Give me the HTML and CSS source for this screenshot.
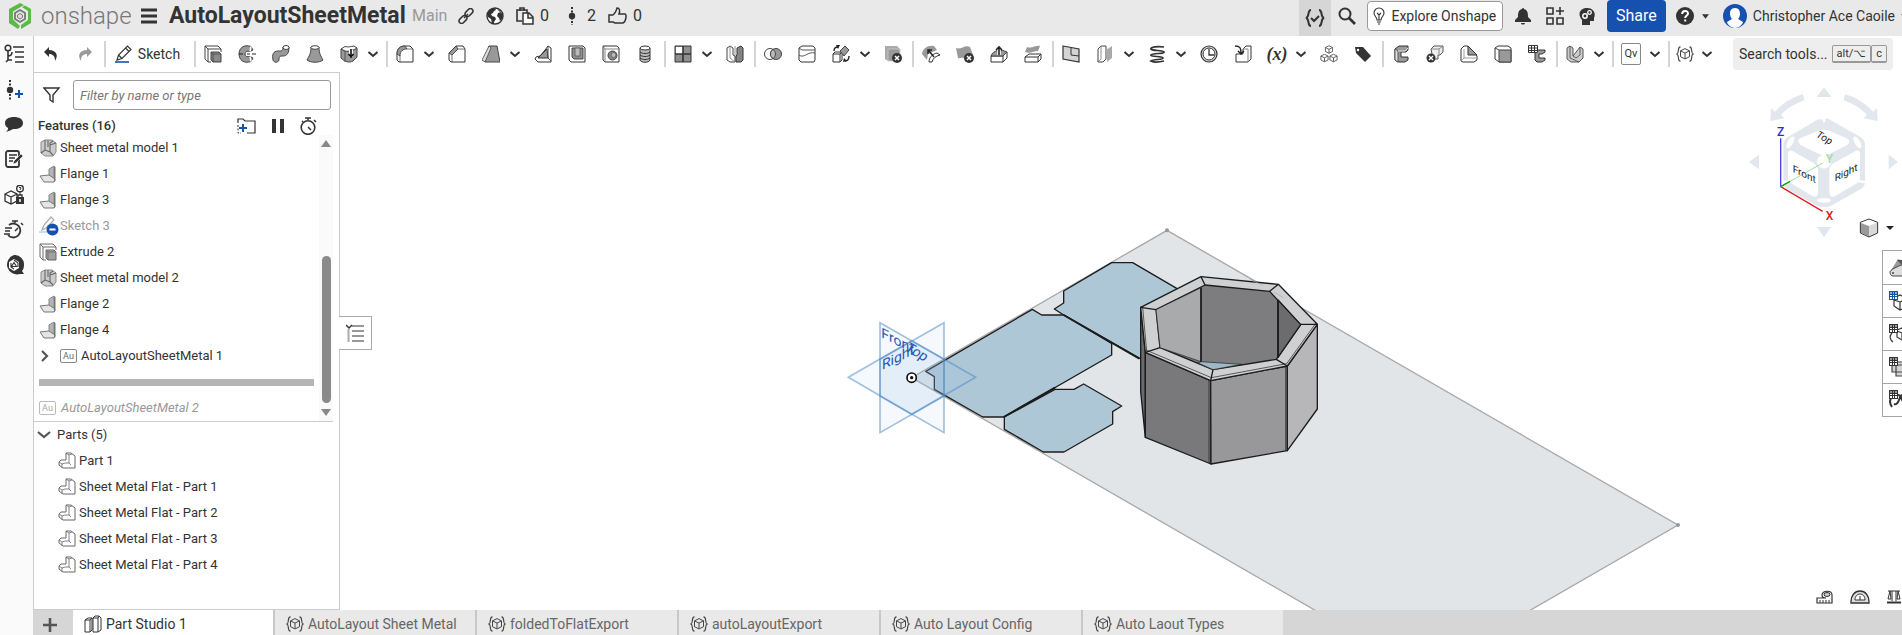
FILE: index.html
```html
<!DOCTYPE html>
<html lang="en">
<head>
<meta charset="utf-8">
<title>AutoLayoutSheetMetal | Part Studio 1</title>
<link rel="stylesheet" href="styles.css">
</head>
<body>
<svg class="sprite" aria-hidden="true">
  <defs>
    <symbol id="chev" viewBox="0 0 12 12"><path d="M1.500 4L6 8l4.500-4" fill="none" stroke="#333" stroke-width="2"/></symbol>
    <symbol id="caret" viewBox="0 0 8 5"><path d="M0 0h8L4 5z" fill="#333"/></symbol>
    <symbol id="undo" viewBox="0 0 18 18"><path d="M7 2L2 7l5 5V9c4 0 6 2 6 7 4-6 1-11-6-11z" fill="#333"/></symbol>
    <symbol id="redo" viewBox="0 0 18 18"><path d="M11 2l5 5-5 5V9c-4 0-6 2-6 7-4-6-1-11 6-11z" fill="#999"/></symbol>
    <symbol id="pencil" viewBox="0 0 18 18"><path d="M2 15l1.500-5 9-9 3.500 3.500-9 9z M3.500 10l3.500 3.500M10.500 3l3.500 3.500" fill="#fff" stroke="#333" stroke-width="1.200"/><path d="M0 17h14" stroke="#1651b0" stroke-width="1.600"/></symbol>
    <symbol id="extrude" viewBox="0 0 18 18"><path d="M1 1h13l3 3M1 1v13l3 3V4L1 1M4 4h13v3M4 17h3" fill="none" stroke="#444"/><path d="M7 7h8l2 2v8H9l-2-2z" fill="#8a8a8a" stroke="#444"/><path d="M7 7l2 2h8M9 9v8" fill="none" stroke="#444" stroke-width=".8"/></symbol>
    <symbol id="revolve" viewBox="0 0 18 18"><path d="M13 1.500C6-1 1 3 1 9s5 10 12 7.500l2-3.500-3-1.500c-3 1-5-.5-5-2.500s2-3.500 5-2.500L15 5z" fill="#999" stroke="#444"/><path d="M1 9h4M9 9h3M14 9h4" stroke="#222" stroke-width="1.200"/><path d="M13 1.500l-1 5M13 16.500l-1-5" stroke="#fff" stroke-width="1.500"/></symbol>
    <symbol id="sweep" viewBox="0 0 18 18"><path d="M1 15c-1-5 0-9 5-9 4 0 5 0 5-4h6c0 6-2 9-6 9-4 0-4 1-4 4-1 3-5 3-6 0z" fill="#999" stroke="#444"/><ellipse cx="14" cy="2.500" rx="3" ry="2" fill="#fff" stroke="#444"/></symbol>
    <symbol id="loft" viewBox="0 0 18 18"><path d="M5 2c0 7-2 9-4 13 4 3 12 3 16 0-2-4-4-6-4-13z" fill="#999" stroke="#444"/><ellipse cx="9" cy="2.500" rx="4" ry="1.800" fill="#fff" stroke="#444"/></symbol>
    <symbol id="thicken" viewBox="0 0 18 18"><path d="M1 4l4 2c4 0 8 0 12-3v9l-4 4c-4 2-8 1-12-3z" fill="#999" stroke="#444"/><path d="M1 4l4-2.500c3 1 6 0 9-.5l3 2c-3 2-8 4-12 3z" fill="#fff" stroke="#444"/><path d="M5 6v11" stroke="#555"/><path d="M11 5v7" stroke="#fff" stroke-width="4"/><path d="M11 4v7M8.500 9l2.500 3 2.500-3" stroke="#111" stroke-width="1.600" fill="none"/></symbol>
    <symbol id="fillet" viewBox="0 0 18 18"><path d="M1 9c0-5 3-8 8-8h5l3 3v13H3l-2-2z" fill="#fff" stroke="#333"/><path d="M1 9c0-5 3-8 8-8l2 3c-4 0-7 2-7 7z" fill="#999" stroke="#333" stroke-width=".8"/><path d="M4 10v7M11 4h6" stroke="#555" stroke-width=".8"/></symbol>
    <symbol id="chamfer" viewBox="0 0 18 18"><path d="M1 8l7-7h7l2 3v13H3l-2-2z" fill="#fff" stroke="#333"/><path d="M1 8l7-7 2 3-6 6z" fill="#999" stroke="#333" stroke-width=".8"/><path d="M4 10v7M10 4h7" stroke="#555" stroke-width=".8"/></symbol>
    <symbol id="draft" viewBox="0 0 18 18"><path d="M7 1h8l3 16H3z" fill="#999" stroke="#444"/><path d="M7 1L0 15l3 2L9 3z" fill="#ddd" stroke="#444" stroke-width=".8"/></symbol>
    <symbol id="rib" viewBox="0 0 18 18"><path d="M14 1l3 2v14H4l-3-3 1-2 4-1 5-6z" fill="#fff" stroke="#333"/><path d="M13 4L4 13h10z" fill="#999" stroke="#333"/><path d="M14 1v12l3 3" fill="none" stroke="#555"/></symbol>
    <symbol id="shell" viewBox="0 0 18 18"><path d="M1 1h14l2 2v14H3l-2-2z" fill="#fff" stroke="#333"/><path d="M4 3h11v11H6l-2-2z" fill="#8f8f8f" stroke="#444"/><path d="M7 3h5v8H7z" fill="#bbb" stroke="#555" stroke-width=".8"/></symbol>
    <symbol id="hole" viewBox="0 0 18 18"><path d="M1 1h14l2 2v14H3l-2-2z" fill="#fff" stroke="#333"/><path d="M1 1l2 3v13M3 4h14" fill="none" stroke="#666" stroke-width=".8"/><circle cx="10.500" cy="10.500" r="4.500" fill="#888" stroke="#444"/><circle cx="11.500" cy="10" r="2.500" fill="#bbb" stroke="#555" stroke-width=".8"/></symbol>
    <symbol id="thread" viewBox="0 0 18 18"><path d="M4 3v12c1 3 9 3 10 0V3z" fill="#bbb" stroke="#333"/><path d="M4 7c2 2 8 2 10 0M4 10c2 2 8 2 10 0M4 13c2 2 8 2 10 0" fill="none" stroke="#333"/><ellipse cx="9" cy="3" rx="5" ry="2" fill="#fff" stroke="#333"/></symbol>
    <symbol id="pattern" viewBox="0 0 18 18"><path d="M1 1h16v16H1z" fill="#8f8f8f" stroke="#333"/><path d="M2 2h7v7H2z" fill="#fff"/><path d="M9 1v16M1 9h16" stroke="#333" stroke-width="1.600"/></symbol>
    <symbol id="mirror" viewBox="0 0 18 18"><path d="M1 3l3-2 3 2v7l2 1v6H4l-3-2z" fill="#fff" stroke="#444"/><path d="M17 3l-2-2-4 2v7l-1 1v6h5l2-2z" fill="#888" stroke="#333"/><path d="M4 1v12l5 4M9 1v10M14 3v12" stroke="#777" stroke-width=".8" fill="none"/></symbol>
    <symbol id="boolean" viewBox="0 0 18 18"><circle cx="6" cy="9" r="5.500" fill="#fff" stroke="#444"/><circle cx="12" cy="9" r="5.500" fill="#999" stroke="#444"/><path d="M9 4.400a5.500 5.500 0 010 9.200 5.500 5.500 0 010-9.200z" fill="#bbb" stroke="#444"/></symbol>
    <symbol id="split" viewBox="0 0 18 18"><path d="M1 3l3-2h11l2 2v12l-1 2H3l-2-2z" fill="#fff" stroke="#333"/><path d="M1 3l3 2h13M1 10c5 4 9-4 16-2" stroke="#555" fill="none"/></symbol>
    <symbol id="transform" viewBox="0 0 18 18"><path d="M1 9l2-2h7v8l-2 2H1zM1 9h7v8M8 9l2-2" fill="#fff" stroke="#333"/><path d="M13 1l4 4-5 6-4-5z" fill="#999" stroke="#444"/><path d="M2 6c0-3 2-4 4-4M17 11c0 3-1 5-4 5" fill="none" stroke="#222" stroke-width="1.400"/><path d="M4 0h4L6 4zM11 17l1-4 3 3z" fill="#222"/></symbol>
    <symbol id="delpart" viewBox="0 0 18 18"><path d="M1 1h12l3 3H4v12l-3-2z" fill="#aaa"/><path d="M4 4h12v12H4z" fill="#999" stroke="#ccc" stroke-width=".8"/><circle cx="13" cy="13" r="5" fill="#333"/><path d="M11 11l4 4M15 11l-4 4" stroke="#fff" stroke-width="1.500"/></symbol>
    <symbol id="movef" viewBox="0 0 18 18"><path d="M0 9C1 3 6 0 12 1l3 4-9 4-1 6z" fill="#999"/><path d="M7 17c0-4 3-8 8-9l3 2c-4 1-7 3-8 7z" fill="#fff" stroke="#333"/><path d="M12 12L7 6M6 9V5h4" fill="none" stroke="#222" stroke-width="1.500"/></symbol>
    <symbol id="delface" viewBox="0 0 18 18"><path d="M0 3c5 2 9-4 14-1l3 8-7 5c-3-4-6-1-8-2z" fill="#999"/><circle cx="13" cy="13" r="5" fill="#333"/><path d="M11 11l4 4M15 11l-4 4" stroke="#fff" stroke-width="1.500"/></symbol>
    <symbol id="moveup" viewBox="0 0 18 18"><path d="M1 11h12v6H1zM13 11l4-4v6l-4 4" fill="#fff" stroke="#333"/><path d="M1 11c2-6 10-7 16-4l-4 4z" fill="#999" stroke="#444"/><path d="M9 10V2" stroke="#fff" stroke-width="3.500"/><path d="M9 10V2M6 5l3-3 3 3" fill="none" stroke="#222" stroke-width="1.600"/></symbol>
    <symbol id="replace" viewBox="0 0 18 18"><path d="M1 12l4-3h12v5l-3 3H1zM1 12h13v5M14 12l3-3" fill="#fff" stroke="#333"/><path d="M3 2c5 2 9-2 13-1l-2 5c-4 0-8 3-13 1z" fill="#999"/></symbol>
    <symbol id="plane" viewBox="0 0 18 18"><path d="M1 1l16 3v13L1 14z" fill="#d4d4d4" stroke="#333" stroke-width="1.200"/><path d="M9 3v7l8 1" fill="none" stroke="#333"/></symbol>
    <symbol id="offset" viewBox="0 0 18 18"><path d="M2 4l3-3h5v13l-3 3H2z" fill="#fff" stroke="#444"/><path d="M5 1v13M2 17l3-3" stroke="#777" stroke-width=".8"/><path d="M10 5l6-4v12l-5 4z" fill="#aaa"/></symbol>
    <symbol id="helix" viewBox="0 0 18 18"><path d="M16 2C10 1 2 2 3 4s12 1 13 3-12 1-13 3 12 1 12 3-9 1-12 3c4 2 9 1 13 0" fill="none" stroke="#333" stroke-width="1.700"/></symbol>
    <symbol id="clock" viewBox="0 0 18 18"><circle cx="9" cy="9" r="8" fill="#ddd" stroke="#333" stroke-width="1.200"/><circle cx="9" cy="9" r="6" fill="#fff" stroke="#333"/><path d="M9 4v6h5" fill="none" stroke="#333" stroke-width="1.300"/></symbol>
    <symbol id="import" viewBox="0 0 18 18"><path d="M2 9h7V4l3-3h5v13l-3 3H2z" fill="#fff" stroke="#333"/><path d="M9 4h5v13" fill="none" stroke="#888"/><path d="M1 1c5 0 6 2 6 7M4 6l3 3 3-3" fill="none" stroke="#222" stroke-width="1.400"/></symbol>
    <symbol id="cube" viewBox="0 0 10 10"><path d="M5 .8l4 2v4.400l-4 2-4-2V2.800z M1 2.800l4 2 4-2M5 4.800v4.400" fill="#fff" stroke="#444" stroke-width=".9"/></symbol>
    <symbol id="cubes" viewBox="0 0 18 18"><use href="#cube" x="4.500" y="0" width="9" height="9"/><use href="#cube" x="0" y="8.500" width="9" height="9"/><use href="#cube" x="9" y="8.500" width="9" height="9"/></symbol>
    <symbol id="tag" viewBox="0 0 18 18"><path d="M1 2l8 0 8 9-6 6-9-9z" fill="#333"/><circle cx="4" cy="5" r="1.200" fill="#fff"/></symbol>
    <symbol id="cshape" viewBox="0 0 18 18"><path d="M3 4l4-3h9v4l-2 2H9v5h7v3l-3 2H6l-3-2z" fill="#999" stroke="#333"/><path d="M3 4l3 2v11L3 15z" fill="#ddd" stroke="#444" stroke-width=".8"/><path d="M6 6h7l3-3" stroke="#ddd" fill="none"/></symbol>
    <symbol id="unfoldx" viewBox="0 0 18 18"><path d="M5 4l3-3h9v6l-3 3h-2v4H7z" fill="#eee" stroke="#555"/><path d="M5 4h8v5M13 4l4-3" fill="none" stroke="#888"/><circle cx="5" cy="13" r="4.500" fill="#333"/><path d="M3 11l4 4M7 11l-4 4" stroke="#fff" stroke-width="1.400"/></symbol>
    <symbol id="corner" viewBox="0 0 18 18"><path d="M1 4l3-3h4l9 10v4l-3 2H3l-2-1z" fill="#fff" stroke="#333"/><path d="M8 1v9h9z" fill="#999" stroke="#333"/><path d="M4 4v9l-3 3M4 13h12" fill="none" stroke="#888" stroke-width=".8"/></symbol>
    <symbol id="tab" viewBox="0 0 18 18"><path d="M1 3l3-2h10l3 2v14H5l-4-3z" fill="#fff" stroke="#333"/><path d="M5 5h12v12H5z" fill="#999" stroke="#444"/><path d="M1 3l4 2" stroke="#444"/></symbol>
    <symbol id="tablec" viewBox="0 0 18 18"><path d="M7 5h10v2l-3 2h-3v4h6v2l-3 2H9l-2-2z" fill="#999" stroke="#333"/><path d="M0 0h10v8H0z" fill="#fff"/><path d="M.5.500h9v7h-9zM0 3h10M0 5.500h10M3.500 0v8M6.500 0v8" fill="none" stroke="#333"/></symbol>
    <symbol id="smodel" viewBox="0 0 18 18"><path d="M1 3l3-2 3 2v8l7-9 3 2v9l-4 4H5l-4-3z" fill="#ccc" stroke="#555"/><path d="M4 1v12l9 4M7 11l3 2 4-3V2" fill="none" stroke="#555" stroke-width=".9"/></symbol>
    <symbol id="sheetm" viewBox="0 0 18 18"><path d="M2 3l4-2h7l4 3v9l-3 4H6l-4-3z" fill="#ccc" stroke="#888"/><path d="M6 1v10l5 2V4l3-2M9 1v7M11 13l3 3M2 14l4-3M11 6l6-2" fill="none" stroke="#666" stroke-width="1.100"/></symbol>
    <symbol id="flange" viewBox="0 0 18 18"><path d="M10 4l5-3v12l-5-2z" fill="#b4b4b4" stroke="#888"/><path d="M1 11l9-1 6 4-1 3H5z" fill="#e4e4e4" stroke="#777"/><path d="M15 1l1.500 1v14L15 17z" fill="#777"/></symbol>
    <symbol id="skoff" viewBox="0 0 20 20"><path d="M3 14l2-5 7-8 3 3-8 8z" fill="none" stroke="#aaa" stroke-width="1.200"/><path d="M0 16h8" stroke="#9db7e0"/><circle cx="13.500" cy="13.500" r="6" fill="#1651b0"/><path d="M10.500 13.500h6" stroke="#fff" stroke-width="2"/></symbol>
    <symbol id="part" viewBox="0 0 18 18"><path d="M8 1h5l4 3v12H5l-4-3v-3l2-2h5z" fill="#fff" stroke="#666"/><path d="M8 1l3 2v8H7l-3 1-3-2M4 12v4M11 3l3-1M11 11l2 2" fill="none" stroke="#777" stroke-width=".9"/></symbol>
    <symbol id="fs" viewBox="0 0 20 18"><path d="M5 1C1 1 4 8 1 9c3 1 0 8 4 8M15 1c4 0 1 7 4 8-3 1 0 8-4 8" fill="none" stroke="#444" stroke-width="1.300"/><path d="M10 3l5 2.500v6.500l-5 2.500-5-2.500V5.500z M5 5.500l5 2.500 5-2.500M10 8v6" fill="none" stroke="#444" stroke-width="1.100"/></symbol>
    <symbol id="studio" viewBox="0 0 18 18"><path d="M1 5l3-2h4v12l-2 2H1zM1 5h5v12M6 5l2-2" fill="#fff" stroke="#333"/><path d="M9 3l2-2h4l2 2v12l-3 2H9zM9 3h5v14M14 3l1-2" fill="#fff" stroke="#333"/></symbol>
    <symbol id="grid9" viewBox="0 0 9 9"><path d="M0 0h9v9H0z" fill="currentColor"/><path d="M1 4h2v1H1zM4 4h1v1H4zM6 4h2v1H6zM1 6h2v2H1zM4 6h1v2H4zM6 6h2v2H6z" fill="#fff"/><path d="M1 1h2v2H1zM4 1h1v2H4zM6 1h2v2H6z" fill="#fff" opacity=".5"/></symbol>
  </defs>
</svg>

<header class="topbar">
  <a class="brand" href="#" aria-label="Onshape">
    <svg class="brand-mark" viewBox="0 0 24 28"><path d="M1 7L12 1l4 2-11 6.500v8L12 24l-2 3-9-6z" fill="#5bb947"/><path d="M14 5l3-1.500 6 3.500v14l-10 6v-4l7-5V9z" fill="#5bb947"/><path d="M12 8l5 3v6l-5 3-5-3v-6z" fill="none" stroke="#777" stroke-width="1.800"/><path d="M12 11.500l2.500 1.500v2.500L12 17l-2.500-1.500V13z" fill="#ddd" stroke="#777"/></svg>
    <span class="brand-name">onshape</span>
  </a>
  <button class="plain menu" aria-label="Menu"><svg width="16" height="16" viewBox="0 0 16 16"><path d="M0 2h16M0 8h16M0 14h16" stroke="#333" stroke-width="3"/></svg></button>
  <h1 class="doc">AutoLayoutSheetMetal</h1>
  <span class="branch">Main</span>
  <button class="plain info" aria-label="Link"><svg width="16" height="16" viewBox="0 0 16 16"><g fill="none" stroke="#333" stroke-width="1.500"><rect x="6.500" y="2" width="9" height="5" rx="2.500" transform="rotate(-45 11 4.500)"/><rect x="0.500" y="9" width="9" height="5" rx="2.500" transform="rotate(-45 5 11.500)"/><path d="M6 10l4-4"/></g></svg></button>
  <button class="plain info" aria-label="Public"><svg width="18" height="18" viewBox="0 0 18 18"><circle cx="9" cy="9" r="8" fill="#fff" stroke="#333" stroke-width="1.400"/><path d="M2 5c1-2 4-4 7-4l1 2-2 1-1 2-2 1 1 2 3 1 1 2-2 3v2l-2-1-1-4-3-2-1-3zM11 2l4 2-1 1zM12 6l3-1 2 4-1 3-2 2-1-3-2-2z" fill="#333"/></svg></button>
  <button class="plain info copies"><svg width="18" height="18" viewBox="0 0 18 18"><path d="M6 14H1V3h10v3M4 4V1h4v3" fill="none" stroke="#333" stroke-width="1.600"/><path d="M7 6h6l4 4v7H7zM12 6v5h5" fill="#fff" stroke="#333" stroke-width="1.500"/></svg><span>0</span></button>
  <button class="plain info versions"><svg width="10" height="18" viewBox="0 0 10 18"><path d="M5 0v18" stroke="#333" stroke-width="2" stroke-dasharray="2 1.500"/><circle cx="5" cy="9" r="3.200" fill="#333"/></svg><span>2</span></button>
  <button class="plain info"><svg width="19" height="18" viewBox="0 0 19 18"><path d="M1 8h4c3-2 3-4 4-7 3 0 3 3 2 6h6c2 0 1 8-2 9H7l-2-1H1z" fill="none" stroke="#333" stroke-width="1.500"/></svg><span>0</span></button>

  <div class="account">
    <button class="plain braces" aria-label="FeatureScript notices"><svg width="20" height="18" viewBox="0 0 20 18"><path d="M6 1C2 1 5 8 1 9c4 1 1 8 5 8M14 1c4 0 1 7 5 8-4 1-1 8-5 8M6 9l3 3 5-5" fill="none" stroke="#333" stroke-width="2"/></svg></button>
    <button class="plain w32" aria-label="Search"><svg width="18" height="18" viewBox="0 0 18 18"><circle cx="7" cy="7" r="5.500" fill="none" stroke="#333" stroke-width="2"/><path d="M11 11l6 6" stroke="#333" stroke-width="2.600"/></svg></button>
    <button class="explore"><svg width="12" height="18" viewBox="0 0 12 18"><path d="M4 13c0-3-3-4-3-7a5 5 0 0110 0c0 3-3 4-3 7zM4 15h4M5 17h2M4 6l2 2 2-2M6 8v5" fill="none" stroke="#333" stroke-width="1.100"/></svg>Explore Onshape</button>
    <button class="plain w32" aria-label="Notifications"><svg width="18" height="18" viewBox="0 0 18 18"><path d="M9 1c1 0 1 1 1 1 4 1 4 5 4 8l3 3v2H1v-2l3-3c0-3 0-7 4-8 0 0 0-1 1-1zM7 16h4c0 2-4 2-4 0z" fill="#333"/></svg></button>
    <button class="plain w32" aria-label="Apps"><svg width="18" height="18" viewBox="0 0 18 18"><path d="M1 1h6v6H1zM1 11h6v6H1zM11 11h6v6h-6zM14 0v8M10 4h8" fill="none" stroke="#333" stroke-width="1.600"/></svg></button>
    <button class="plain w32" aria-label="Learning"><svg width="18" height="18" viewBox="0 0 18 18"><path d="M4 18v-5C-1 7 2 1 9 1s9 6 7 10v3h-4v4z" fill="#333"/><circle cx="7" cy="9" r="2.200" fill="none" stroke="#fff" stroke-width="1.500"/><circle cx="11.500" cy="5.500" r="1.800" fill="none" stroke="#fff" stroke-width="1.300"/></svg></button>
    <button class="share">Share</button>
    <button class="plain help" aria-label="Help"><svg width="18" height="18" viewBox="0 0 18 18"><circle cx="9" cy="9" r="9" fill="#333"/><path d="M6.200 7c0-4 5.800-4 5.800-.5 0 2-2.800 2-2.800 4.500M9.200 12.500v2" fill="none" stroke="#fff" stroke-width="2"/></svg><svg width="7" height="5"><use href="#caret"/></svg></button>
    <button class="plain user"><svg width="24" height="24" viewBox="0 0 24 24"><circle cx="12" cy="12" r="12" fill="#1651b0"/><path d="M12 4c4 0 5 3 5 6s-2 5-2 5l5 3c0 2-4 6-8 6s-8-4-8-6l5-3s-2-2-2-5 1-6 5-6z" fill="#fff"/></svg><span>Christopher Ace Caoile</span><svg width="7" height="5"><use href="#caret"/></svg></button>
  </div>
</header>

<div class="work">
  <nav class="rail" aria-label="Panels">
    <button class="plain rail-first" aria-label="Features"><svg width="20" height="20" viewBox="0 0 20 20"><circle cx="4" cy="4" r="2.800" fill="none" stroke="#333" stroke-width="1.500"/><path d="M4 7v9h4M4 12c3 0 4-1 4-4M2 18l2-2M9 3h11M11 8h9M11 13h9M11 18h9" fill="none" stroke="#333" stroke-width="1.600"/></svg></button>
    <button class="plain" aria-label="Versions"><svg width="20" height="20" viewBox="0 0 20 20"><path d="M6 0v20" stroke="#333" stroke-width="2" stroke-dasharray="2 1.500"/><circle cx="6" cy="10" r="3.200" fill="#333"/><path d="M15 10v8M11 14h8" stroke="#1651b0" stroke-width="2"/></svg></button>
    <button class="plain" aria-label="Comments"><svg width="20" height="20" viewBox="0 0 20 20"><path d="M10 2c5 0 9 2 9 6s-4 6-9 6c-2 0-4 2-8 3 2-2 2-3 2-4-2-1-3-3-3-5 0-4 4-6 9-6z" fill="#333"/></svg></button>
    <button class="plain" aria-label="Notes"><svg width="20" height="20" viewBox="0 0 20 20"><rect x="2" y="1" width="13" height="16" rx="2" fill="none" stroke="#333" stroke-width="1.800"/><path d="M5 5h8M5 8h6M5 11h4" stroke="#333" stroke-width="1.400"/><path d="M17 4l2 2-7 7-3 1 1-3z" fill="#333" stroke="#fafafa" stroke-width=".5"/></svg></button>
    <button class="plain" aria-label="Permissions"><svg width="20" height="20" viewBox="0 0 20 20"><path d="M1 9l6-3 6 3v7l-6 3-6-3zM1 9l6 3 6-3M7 12v7" fill="#fafafa" stroke="#333" stroke-width="1.300"/><circle cx="16" cy="3.500" r="3.300" fill="#fafafa" stroke="#333" stroke-width="1.400"/><path d="M15 3l1-1 1 1-1 2M16 7v3" stroke="#333" fill="none"/><path d="M12 12h8v7h-8z" fill="#333"/><path d="M14 12v-2h4v2" fill="none" stroke="#333" stroke-width="1.300"/><path d="M16 14v3" stroke="#fff" stroke-width="1.500"/></svg></button>
    <button class="plain" aria-label="Performance"><svg width="20" height="20" viewBox="0 0 20 20"><path d="M5 5a7 7 0 11-1 10" fill="none" stroke="#333" stroke-width="1.800"/><path d="M11 3V1M8 1h6M17 3l2 2M11 11l3-3M1 8h7M1 11h5M0 14h6" stroke="#333" stroke-width="1.500"/></svg></button>
    <button class="plain" aria-label="Advisor"><svg width="20" height="20" viewBox="0 0 20 20"><path d="M10 0a9.500 9.500 0 0110 10c0 3-1 5-2 6l2 3h-4A9.500 9.500 0 1110 0z" fill="#333"/><path d="M10 4l5 3v6l-5 3-5-3V7z" fill="#fff"/><path d="M10 7.500l2.500 4h-5zM7 8v4l3 2M10 5l4 3v4" fill="none" stroke="#333" stroke-width="1.100"/></svg></button>
  </nav>

  <main class="main">
    <div class="toolbar" role="toolbar" aria-label="Tools">
      <button class="plain tool" aria-label="Undo"><svg><use href="#undo"/></svg></button>
      <button class="plain tool" aria-label="Redo"><svg><use href="#redo"/></svg></button>
      <i class="sep"></i>
      <button class="plain sketch"><svg><use href="#pencil"/></svg>Sketch</button>
      <i class="sep"></i>
      <button class="plain tool" aria-label="Extrude"><svg><use href="#extrude"/></svg></button>
      <button class="plain tool" aria-label="Revolve"><svg><use href="#revolve"/></svg></button>
      <button class="plain tool" aria-label="Sweep"><svg><use href="#sweep"/></svg></button>
      <button class="plain tool" aria-label="Loft"><svg><use href="#loft"/></svg></button>
      <button class="plain tool" aria-label="Thicken"><svg><use href="#thicken"/></svg></button>
      <button class="plain more" aria-label="More solids"><svg><use href="#chev"/></svg></button>
      <i class="sep"></i>
      <button class="plain tool" aria-label="Fillet"><svg><use href="#fillet"/></svg></button>
      <button class="plain more" aria-label="More fillets"><svg><use href="#chev"/></svg></button>
      <button class="plain tool" aria-label="Chamfer"><svg><use href="#chamfer"/></svg></button>
      <button class="plain tool" aria-label="Draft"><svg><use href="#draft"/></svg></button>
      <button class="plain more" aria-label="More drafts"><svg><use href="#chev"/></svg></button>
      <button class="plain tool" aria-label="Rib"><svg><use href="#rib"/></svg></button>
      <button class="plain tool" aria-label="Shell"><svg><use href="#shell"/></svg></button>
      <button class="plain tool" aria-label="Hole"><svg><use href="#hole"/></svg></button>
      <button class="plain tool" aria-label="Thread"><svg><use href="#thread"/></svg></button>
      <i class="sep"></i>
      <button class="plain tool" aria-label="Pattern"><svg><use href="#pattern"/></svg></button>
      <button class="plain more" aria-label="More patterns"><svg><use href="#chev"/></svg></button>
      <button class="plain tool" aria-label="Mirror"><svg><use href="#mirror"/></svg></button>
      <i class="sep"></i>
      <button class="plain tool" aria-label="Boolean"><svg><use href="#boolean"/></svg></button>
      <button class="plain tool" aria-label="Split"><svg><use href="#split"/></svg></button>
      <button class="plain tool" aria-label="Transform"><svg><use href="#transform"/></svg></button>
      <button class="plain more" aria-label="More transforms"><svg><use href="#chev"/></svg></button>
      <button class="plain tool" aria-label="Delete part"><svg><use href="#delpart"/></svg></button>
      <i class="sep"></i>
      <button class="plain tool" aria-label="Modify fillet"><svg><use href="#movef"/></svg></button>
      <button class="plain tool" aria-label="Delete face"><svg><use href="#delface"/></svg></button>
      <button class="plain tool" aria-label="Move face"><svg><use href="#moveup"/></svg></button>
      <button class="plain tool" aria-label="Replace face"><svg><use href="#replace"/></svg></button>
      <i class="sep"></i>
      <button class="plain tool" aria-label="Plane"><svg><use href="#plane"/></svg></button>
      <button class="plain tool" aria-label="Offset surface"><svg><use href="#offset"/></svg></button>
      <button class="plain more" aria-label="More surfaces"><svg><use href="#chev"/></svg></button>
      <button class="plain tool" aria-label="Helix"><svg><use href="#helix"/></svg></button>
      <button class="plain more" aria-label="More curves"><svg><use href="#chev"/></svg></button>
      <button class="plain tool" aria-label="Measure time"><svg><use href="#clock"/></svg></button>
      <button class="plain tool" aria-label="Derived"><svg><use href="#import"/></svg></button>
      <button class="plain tool var" aria-label="Variable">(<b>x</b>)</button>
      <button class="plain more" aria-label="More variables"><svg><use href="#chev"/></svg></button>
      <button class="plain tool" aria-label="Composite part"><svg><use href="#cubes"/></svg></button>
      <button class="plain tool" aria-label="Tag"><svg><use href="#tag"/></svg></button>
      <i class="sep"></i>
      <button class="plain tool" aria-label="Bend"><svg><use href="#cshape"/></svg></button>
      <button class="plain tool" aria-label="Rip"><svg><use href="#unfoldx"/></svg></button>
      <button class="plain tool" aria-label="Corner"><svg><use href="#corner"/></svg></button>
      <button class="plain tool" aria-label="Tab"><svg><use href="#tab"/></svg></button>
      <button class="plain tool" aria-label="Sheet metal table"><svg><use href="#tablec"/></svg></button>
      <i class="sep"></i>
      <button class="plain tool" aria-label="Sheet metal model"><svg><use href="#smodel"/></svg></button>
      <button class="plain more" aria-label="More sheet metal"><svg><use href="#chev"/></svg></button>
      <i class="sep"></i>
      <button class="plain tool"><span class="qv">Qv</span></button>
      <button class="plain more" aria-label="More custom features"><svg><use href="#chev"/></svg></button>
      <i class="sep"></i>
      <button class="plain tool tight" aria-label="Custom feature"><svg><use href="#fs"/></svg></button>
      <button class="plain more" aria-label="Add custom features"><svg><use href="#chev"/></svg></button>
      <button class="find">Search tools...<kbd>alt/⌥</kbd><kbd>c</kbd></button>
    </div>

    <div class="stage">
      <aside class="panel">
        <div class="filter">
          <svg width="18" height="18" viewBox="0 0 18 18" aria-hidden="true"><path d="M1 2h15l-6 7v7l-3-2V9z" fill="none" stroke="#333" stroke-width="1.400"/></svg>
          <input type="text" aria-label="Filter features" placeholder="Filter by name or type">
        </div>
        <div class="heading">
          <h2>Features (16)</h2>
          <button class="plain" aria-label="Add folder"><svg width="20" height="18" viewBox="0 0 20 18"><path d="M1 6V2h5l2 2h10v12h-8" fill="none" stroke="#333" stroke-width="1.200"/><path d="M1 8v8h3" fill="none" stroke="#333" stroke-dasharray="2 1.500"/><path d="M6 7v8M2 11h8" stroke="#1651b0" stroke-width="2"/></svg></button>
          <button class="plain" aria-label="Pause"><svg width="18" height="18" viewBox="0 0 18 18"><path d="M5 2v14M13 2v14" stroke="#333" stroke-width="4"/></svg></button>
          <button class="plain" aria-label="Regeneration times"><svg width="18" height="18" viewBox="0 0 18 18"><circle cx="9" cy="10.500" r="6.800" fill="none" stroke="#333" stroke-width="1.600"/><path d="M9 3V1M6 1h6M15 3l2 2M3 4l1 1M9 10l3 3" stroke="#333" stroke-width="1.500"/></svg></button>
        </div>
        <div class="tree">
          <ul class="list">
            <li><svg><use href="#sheetm"/></svg>Sheet metal model 1</li>
            <li><svg><use href="#flange"/></svg>Flange 1</li>
            <li><svg><use href="#flange"/></svg>Flange 3</li>
            <li class="off"><svg class="wide"><use href="#skoff"/></svg>Sketch 3</li>
            <li><svg><use href="#extrude" opacity=".8"/></svg>Extrude 2</li>
            <li><svg><use href="#sheetm"/></svg>Sheet metal model 2</li>
            <li><svg><use href="#flange"/></svg>Flange 2</li>
            <li><svg><use href="#flange"/></svg>Flange 4</li>
            <li class="group"><svg class="arrow" viewBox="0 0 12 12"><path d="M3 1l5 5-5 5" fill="none" stroke="#555" stroke-width="2.200"/></svg><span class="au">Au</span>AutoLayoutSheetMetal 1</li>
            <li class="rollback"><i></i></li>
            <li class="off ital"><span class="au">Au</span>AutoLayoutSheetMetal 2</li>
          </ul>
          <div class="bar" aria-hidden="true"><i class="up"></i><i class="thumb"></i><i class="down"></i></div>
        </div>
        <div class="parts">
          <h2><svg width="14" height="12" viewBox="0 0 14 12"><path d="M1 3l6 5 6-5" fill="none" stroke="#555" stroke-width="2.200"/></svg>Parts (5)</h2>
          <ul class="list">
            <li><svg><use href="#part"/></svg>Part 1</li>
            <li><svg><use href="#part"/></svg>Sheet Metal Flat - Part 1</li>
            <li><svg><use href="#part"/></svg>Sheet Metal Flat - Part 2</li>
            <li><svg><use href="#part"/></svg>Sheet Metal Flat - Part 3</li>
            <li><svg><use href="#part"/></svg>Sheet Metal Flat - Part 4</li>
          </ul>
        </div>
      </aside>

      <section class="view" aria-label="Model view">
        <svg class="scene" viewBox="-1440 -444 4686 1614" preserveAspectRatio="xMidYMid slice">
          <path d="M275 473L1041 31 2574 915 1808 1357z" fill="#e2e5e8" stroke="#a9a9a9" stroke-width="4"/>
          <circle cx="1041" cy="31" r="6" fill="#999"/><circle cx="2574" cy="915" r="6" fill="#999"/>
          <g fill="#aec7d7" stroke="#1c1c1c" stroke-width="4" stroke-linejoin="round">
            <path d="M875 128h63l132 77v273L731 285l-28-18 28-18v-36z"/>
            <path d="M317 454L637 268l28 17h66l144 85v35L551 591h-63l-145-83v-38z"/>
            <path d="M553 591l152-83h57l29-16 114 66-27 17v37l-146 84h-62l-117-68z"/>
          </g>
          <path d="M731 285l227 131M551 591L705 503" stroke="#1c1c1c" stroke-width="6"/>
          <g fill="#9cc0e8" fill-opacity=".1" stroke="#4a86c4" stroke-opacity=".5" stroke-width="5">
            <path d="M180 308l192 110v220L180 528z"/>
            <path d="M372 308L180 418v220l192-110z"/>
            <path d="M85 472l190-110 192 110-192 111z"/>
          </g>
          <g class="plane-name">
            <text transform="matrix(1 .5 0 1 184 352)">Front</text>
            <text transform="matrix(1 -.5 0 1 186 450)">Right</text>
            <text transform="matrix(.87 .5 -.6 .8 252 390)">Top</text>
          </g>
          <circle cx="275" cy="473" r="14" fill="#fff" stroke="#111" stroke-width="5"/><circle cx="275" cy="473" r="5" fill="#111"/>
          <g stroke="#1c1c1c" stroke-width="4" stroke-linejoin="round">
            <path d="M962 262l14 135v255l-14-137z" fill="#6a6b6c"/>
            <path d="M976 397l196 85 1 250-197-80z" fill="#79797b"/>
            <path d="M1172 482l230-44v254l-229 40z" fill="#98989a"/>
            <path d="M1402 438l90-125v254l-90 125z" fill="#b7b7b9"/>
            <path d="M962 262l181-92 232 23 117 120-90 125-230 44-196-85z" fill="#cfd0d2"/>
            <path d="M1008 269l147-74 194 19 93 100-73 104-190 31-159-66z" fill="#7d7d7f"/>
            <path d="M1008 269l135-66v222l-123-42z" fill="#a9aaac" stroke-width="2"/>
            <path d="M1374 240l68 74-68 98z" fill="#6c6c6e"/>
            <path d="M1134 429l9-4 122 8-86 16z" fill="#9fb6c4" stroke-width="2"/>
          </g>
          <g fill="none" stroke="#1c1c1c" stroke-width="4">
            <path d="M962 262l46 7M1143 170l12 25M1375 193l-26 21M1492 313h-50M1402 438l-33-20M1172 482l7-33M976 397l44-14"/>
            <path d="M1143 203v222M1374 240v172" stroke-width="5"/>
            <path d="M1167 482v248M1397 440v252M980 391l194 82 226-42 88-122M968 262l12 132" stroke-width="2"/>
          </g>
          <path d="M1290 178l38 18M1360 215l30 18" stroke="#aaa" stroke-width="2"/>
        </svg>

        <button class="outline-toggle" aria-label="Collapse list"><svg width="18" height="18" viewBox="0 0 18 18"><path d="M6 2h12M6 7h12M6 12h12M6 17h12" stroke="#333" stroke-width="1.200"/><path d="M0 1l3 3 3-3" fill="none" stroke="#333" stroke-width="1.500"/><path d="M2.500 5v13" stroke="#aaa" stroke-width="2"/></svg></button>

        <svg class="cube-nav" viewBox="144 30 462 465">
          <g fill="#e1e7ed">
            <path d="M372 37l22 29h-44zM372 486l-22-30h44zM147 261l30-22v44zM594 261l-28-22v44z"/>
            <path d="M309 58l4 18c-30 12-50 22-70 44l10 10-42 8 2-38 12 10c24-26 52-44 84-52z"/>
            <path d="M435 58l-4 18c30 12 50 22 70 44l-10 10 42 8-2-38-12 10c-24-26-52-44-84-52z"/>
            <path d="M372 134l10-4 98 55q15 10 15 25v110q0 14-12 22l-90 50q-20 10-42 0l-90-50q-11-8-11-22V210q0-15 15-25l90-52z"/>
          </g>
          <path d="M372 128v14M500 322l-26-4M248 322l22-4" stroke="#fff" stroke-width="7"/>
          <g fill="#fff">
            <path d="M300 190l60-24q12-4 24 0l56 24q16 8 2 20l-56 28q-14 6-28 0l-56-28q-14-12-2-20z"/>
            <path d="M264 238q0-16 14-10l62 36q14 8 14 22v64q0 20-16 14l-60-36q-14-8-14-22z"/>
            <path d="M480 238q0-16-14-10l-64 36q-14 8-14 22v64q0 20 16 14l62-36q14-8 14-22z"/>
            <circle cx="372" cy="260" r="21"/>
            <ellipse cx="372" cy="376" rx="21" ry="7"/>
            <ellipse cx="271" cy="202" rx="8" ry="20" transform="rotate(30 271 202)"/>
            <ellipse cx="472" cy="202" rx="8" ry="20" transform="rotate(-30 472 202)"/>
          </g>
          <path d="M242 190v145" stroke="#4a3fe0" stroke-width="4"/>
          <path d="M242 335l126 74" stroke="#d22" stroke-width="4"/>
          <path d="M242 335l126-71" stroke="#9fdc9f" stroke-width="3"/><path d="M242 335l28-16" stroke="#1a9a1a" stroke-width="4"/>
          <g class="axis"><text x="231" y="182" fill="#2d2dd8">Z</text><text x="377" y="435" fill="#e02020">X</text><text x="377" y="264" fill="#9fdc9f">Y</text></g>
          <g class="face">
            <text transform="matrix(1 .5 0 1 278 290)">Front</text>
            <text transform="matrix(1 -.5 0 1 404 320)">Right</text>
            <text transform="matrix(.87 .5 -.6 .8 346 184)">Top</text>
          </g>
          <path d="M507 432l26 10v32l-26 12-26-12v-32z" fill="#d8d8d8" stroke="#333" stroke-width="3"/><path d="M507 434l24 9-24 9-24-9z" fill="#fff"/><path d="M483 445l24 9v30l-24-11z" fill="#999"/>
          <path d="M558 453h24l-12 12z" fill="#222"/>
        </svg>

        <div class="side">
          <button aria-label="Appearance"><svg width="20" height="20" viewBox="0 0 20 20"><path d="M1 14L9 1l5 2 6 12v3H5z" fill="#999"/><path d="M8 2h6v6z" fill="#555"/><path d="M1 14c0-2 6-5 14-8l5 12H4c-2 0-3-2-3-4z" fill="#ddd" stroke="#444"/><circle cx="4" cy="15" r="1" fill="#444"/></svg></button>
          <button aria-label="Configurations"><svg class="blue" width="20" height="20" viewBox="0 0 20 20"><path d="M5 7l6-3 7 3v9l-7 3-6-4zM5 9l6 2M11 11v8M11 11l7-3" fill="none" stroke="#333" stroke-width="1.200"/><use href="#grid9" width="9" height="9"/></svg></button>
          <button aria-label="Part tables"><svg width="20" height="20" viewBox="0 0 20 20"><path d="M8 6l5-2 6 2v7l-6 3-5-3zM8 7l5 2M13 9v7M13 9l6-3M3 9c-3 3-2 7 1 9" fill="none" stroke="#444" stroke-width="1.300"/><use href="#grid9" width="9" height="9"/></svg></button>
          <button aria-label="Sheet tables"><svg width="20" height="20" viewBox="0 0 20 20"><path d="M3 5h17v10H3zM7 8h13v11H7z" fill="#d4d4d4" stroke="#444" stroke-width="1.200"/><use href="#grid9" width="9" height="9"/></svg></button>
          <button aria-label="Variable table"><svg width="20" height="20" viewBox="0 0 20 20"><path d="M3 7c-3 3-2 7 0 10M5 14c2 1 4-1 5-4s2-6 6-5M9 5c4-1 3 9 8 8" fill="none" stroke="#333" stroke-width="2"/><use href="#grid9" width="9" height="9"/></svg></button>
        </div>

        <div class="meters">
          <button class="plain" aria-label="Tape measure"><svg width="17" height="14" viewBox="0 0 17 14"><path d="M6 5c0-5 10-5 10 0v8H1V8h9c-3 0-4-1-4-3z" fill="#fff" stroke="#333" stroke-width="1.200"/><ellipse cx="11" cy="4.500" rx="3" ry="2" fill="#ccc" stroke="#333"/><path d="M4 10v3M7 10v3M10 10v3M13 10v3" stroke="#333"/></svg></button>
          <button class="plain" aria-label="Protractor"><svg width="20" height="14" viewBox="0 0 20 14"><path d="M1 13C0-3 20-3 19 13z" fill="#ddd" stroke="#333" stroke-width="1.300"/><path d="M5 10c0-8 10-8 10 0zM10 6v4" fill="#fff" stroke="#333"/></svg></button>
          <button class="plain" aria-label="Mass properties"><svg width="14" height="14" viewBox="0 0 14 14"><path d="M1 1h12M5 1v10M9 1v10M3 1L1 9h3zM11 1l-1 8h3z" fill="none" stroke="#333"/><path d="M0 12.500h14" stroke="#333" stroke-width="2"/></svg></button>
        </div>
      </section>
    </div>

    <nav class="tabs" aria-label="Document tabs">
      <button class="plain add" aria-label="Add tab"><svg width="16" height="16" viewBox="0 0 16 16"><path d="M8 1v14M1 8h14" stroke="#555" stroke-width="2.600"/></svg></button>
      <a class="tab active" href="#"><svg><use href="#studio"/></svg>Part Studio 1</a>
      <a class="tab" href="#"><svg><use href="#fs"/></svg>AutoLayout Sheet Metal</a>
      <a class="tab" href="#"><svg><use href="#fs"/></svg>foldedToFlatExport</a>
      <a class="tab" href="#"><svg><use href="#fs"/></svg>autoLayoutExport</a>
      <a class="tab" href="#"><svg><use href="#fs"/></svg>Auto Layout Config</a>
      <a class="tab" href="#"><svg><use href="#fs"/></svg>Auto Laout Types</a>
    </nav>
  </main>
</div>
</body>
</html>
```
FILE: styles.css
```css
* { box-sizing: border-box; }
html, body { height: 100%; }
body {
  margin: 0;
  display: flex;
  flex-direction: column;
  overflow: hidden;
  background: #fff;
  color: #333;
  font: 14px/18px Roboto, "Liberation Sans", sans-serif;
}
button, input, kbd { font: inherit; color: inherit; }
button { padding: 0; }
svg { display: block; flex: none; }
h1, h2, ul { margin: 0; padding: 0; }
ul { list-style: none; }
.sprite { position: absolute; width: 0; height: 0; }
.plain {
  display: flex;
  align-items: center;
  justify-content: center;
  flex: none;
  border: 0;
  background: none;
}

/* Top bar */
.topbar {
  display: flex;
  align-items: center;
  flex: none;
  height: 36px;
  padding: 0 0 4px 8px;
  background: #e9e9e9;
  white-space: nowrap;
}
.brand { display: flex; align-items: center; gap: 9px; text-decoration: none; color: #777; }
.brand-mark { width: 24px; height: 28px; }
.brand-name { width: 87px; font: 300 24px/28px Roboto, sans-serif; }
.menu { margin-left: 13px; }
.doc { width: 235px; margin-left: 12px; font-size: 23px; line-height: 32px; font-weight: 700; }
.branch { width: 46px; margin-left: 8px; font-size: 16px; color: #999; }
.info { gap: 6px; margin-right: 12px; font-size: 16px; }
.copies { margin-right: 18px; }
.versions { gap: 10px; }
.account { display: flex; align-items: center; flex: none; align-self: flex-start; height: 36px; margin-left: auto; }
.account > * { margin-bottom: 4px; }
.account > .braces { width: 32px; height: 36px; margin: 0; background: #d6d6d6; }
.w32 { width: 32px; height: 32px; }
.explore {
  display: flex;
  align-items: center;
  justify-content: center;
  gap: 6px;
  width: 136px;
  height: 30px;
  margin-left: 4px;
  margin-right: 4px;
  border: 1px solid #999;
  border-radius: 4px;
  background: #fff;
}
.share {
  width: 59px;
  height: 32px;
  margin-left: 4px;
  border: 0;
  border-radius: 4px;
  background: #1651b0;
  color: #fff;
  font-size: 16px;
}
.help { gap: 8px; width: 54px; }
.user { gap: 6px; margin-left: 3px; margin-right: -6px; }

/* Work area */
.work { display: flex; flex: 1; min-height: 0; }
.rail {
  display: flex;
  flex-direction: column;
  flex: none;
  width: 33px;
  background: #fafafa;
}
.rail .plain { height: 35px; width: 28px; }
.rail .rail-first { height: 36px; }
.main { display: flex; flex-direction: column; flex: 1; min-width: 0; }

/* Tool bar */
.toolbar { display: flex; align-items: center; flex: none; height: 36px; border-left: 1px solid #ccc; }
.tool { width: 34px; height: 36px; }
.tool svg, .sketch svg, .list svg, .tab svg { width: 18px; height: 18px; }
.tight { width: 30px; }
.more { width: 18px; height: 36px; padding-right: 4px; }
.more svg { width: 12px; height: 12px; }
.sep { flex: none; width: 2px; height: 26px; margin-left: 2px; background: #d4d4d4; }
.sketch { gap: 5px; width: 86px; padding-right: 3px; }
.var { font: italic 700 18px/20px "Liberation Serif", serif; }
.qv { width: 20px; border: 1px solid #888; border-radius: 2px; font-size: 11px; line-height: 20px; }
.find {
  display: flex;
  align-items: center;
  justify-content: center;
  width: 160px;
  height: 32px;
  margin-left: auto;
  margin-right: 9px;
  border: 0;
  border-radius: 4px;
  background: #eee;
  white-space: nowrap;
}
.find kbd {
  padding: 0 4px;
  border: 1px solid #999;
  border-bottom-width: 2px;
  border-radius: 2px;
  font-size: 11px;
  line-height: 15px;
}
.find kbd:first-of-type { margin-left: 4px; }

/* Feature panel */
.stage { display: flex; flex: 1; min-height: 0; }
.panel {
  display: flex;
  flex-direction: column;
  flex: none;
  width: 307px;
  border: 1px solid #ccc;
  font-size: 13px;
}
.filter { display: flex; align-items: center; gap: 12px; height: 44px; padding: 0 8px 0 9px; }
.filter input {
  flex: 1;
  min-width: 0;
  height: 30px;
  padding: 0 6px;
  border: 1px solid #999;
  border-radius: 3px;
}
.filter input::placeholder { font-style: italic; color: #777; opacity: 1; }
.heading { display: flex; align-items: center; gap: 12px; height: 18px; padding: 0 22px 0 4px; }
.panel h2 { font-size: 13px; font-weight: 500; }
.heading h2 { margin-right: auto; }
.tree { display: flex; border-bottom: 1px solid #ccc; margin-right: 6px; }
.tree .list { flex: 1; }
.list li { display: flex; align-items: center; gap: 3px; height: 26px; padding-left: 5px; white-space: nowrap; }
.list .wide { width: 20px; height: 20px; margin-right: -2px; }
.list .off { color: #999; }
.list .ital { font-style: italic; gap: 5px; }
.list .arrow { width: 12px; height: 12px; margin-right: 5px; }
.list .group { gap: 4px; }
.au {
  width: 17px;
  border: 1px solid #888;
  border-radius: 2px;
  color: #666;
  font-size: 9px;
  font-style: normal;
  line-height: 12px;
  text-align: center;
}
.off .au { border-color: #bbb; color: #aaa; }
.rollback i { flex: 1; height: 7px; margin-right: 5px; background: #b5b5b5; }
.bar { display: flex; flex-direction: column; align-items: center; width: 14px; padding: 5px 0; background: #fafafa; }
.up { border: 5px solid transparent; border-top: 0; border-bottom: 7px solid #888; }
.down { border: 5px solid transparent; border-bottom: 0; border-top: 7px solid #888; }
.thumb { width: 9px; height: 147px; margin: auto 0 6px; border-radius: 5px; background: #8a8a8a; }
.parts h2 { display: flex; align-items: center; gap: 6px; height: 26px; padding-left: 3px; font-weight: 400; }
.parts .list li { padding-left: 24px; }

/* Model view */
.view { position: relative; flex: 1; min-width: 0; }
.scene { position: absolute; inset: 0; width: 100%; height: 100%; }
.plane-name { font: 42px Roboto, sans-serif; fill: #2457b8; }
.axis { font: 500 36px Roboto, sans-serif; }
.face { font: 30px Roboto, sans-serif; fill: #222; }
.outline-toggle {
  position: absolute;
  left: -1px;
  top: 244px;
  display: grid;
  place-items: center;
  width: 33px;
  height: 34px;
  border: 1px solid #aaa;
  border-left: 0;
  background: #fff;
}
.cube-nav { position: absolute; top: 13px; right: 0; width: 154px; height: 155px; }
.side {
  position: absolute;
  top: 178px;
  right: 0;
  width: 20px;
  overflow: hidden;
  border: 1px solid #a5a5a5;
  border-right: 0;
}
.side button { display: block; width: 33px; height: 33px; padding-left: 6px; border: 0; background: #fff; color: #333; }
.side button + button { border-top: 1px solid #a5a5a5; }
.side .blue { color: #1651b0; }
.meters { position: absolute; right: 1px; bottom: 6px; display: flex; gap: 17px; }

/* Document tabs */
.tabs { display: flex; flex: none; height: 25px; background: #d6d6d6; white-space: nowrap; }
.add { width: 40px; padding-top: 4px; padding-right: 6px; }
.tab {
  display: flex;
  align-items: center;
  gap: 4px;
  flex: 0 1 202px;
  padding: 3px 0 0 11px;
  border-left: 2px solid #c8c8c8;
  background: #e9e9e9;
  color: #666;
  text-decoration: none;
}
.tab.active { flex-basis: 200px; border-left: 0; background: #fff; color: #333; }
```
